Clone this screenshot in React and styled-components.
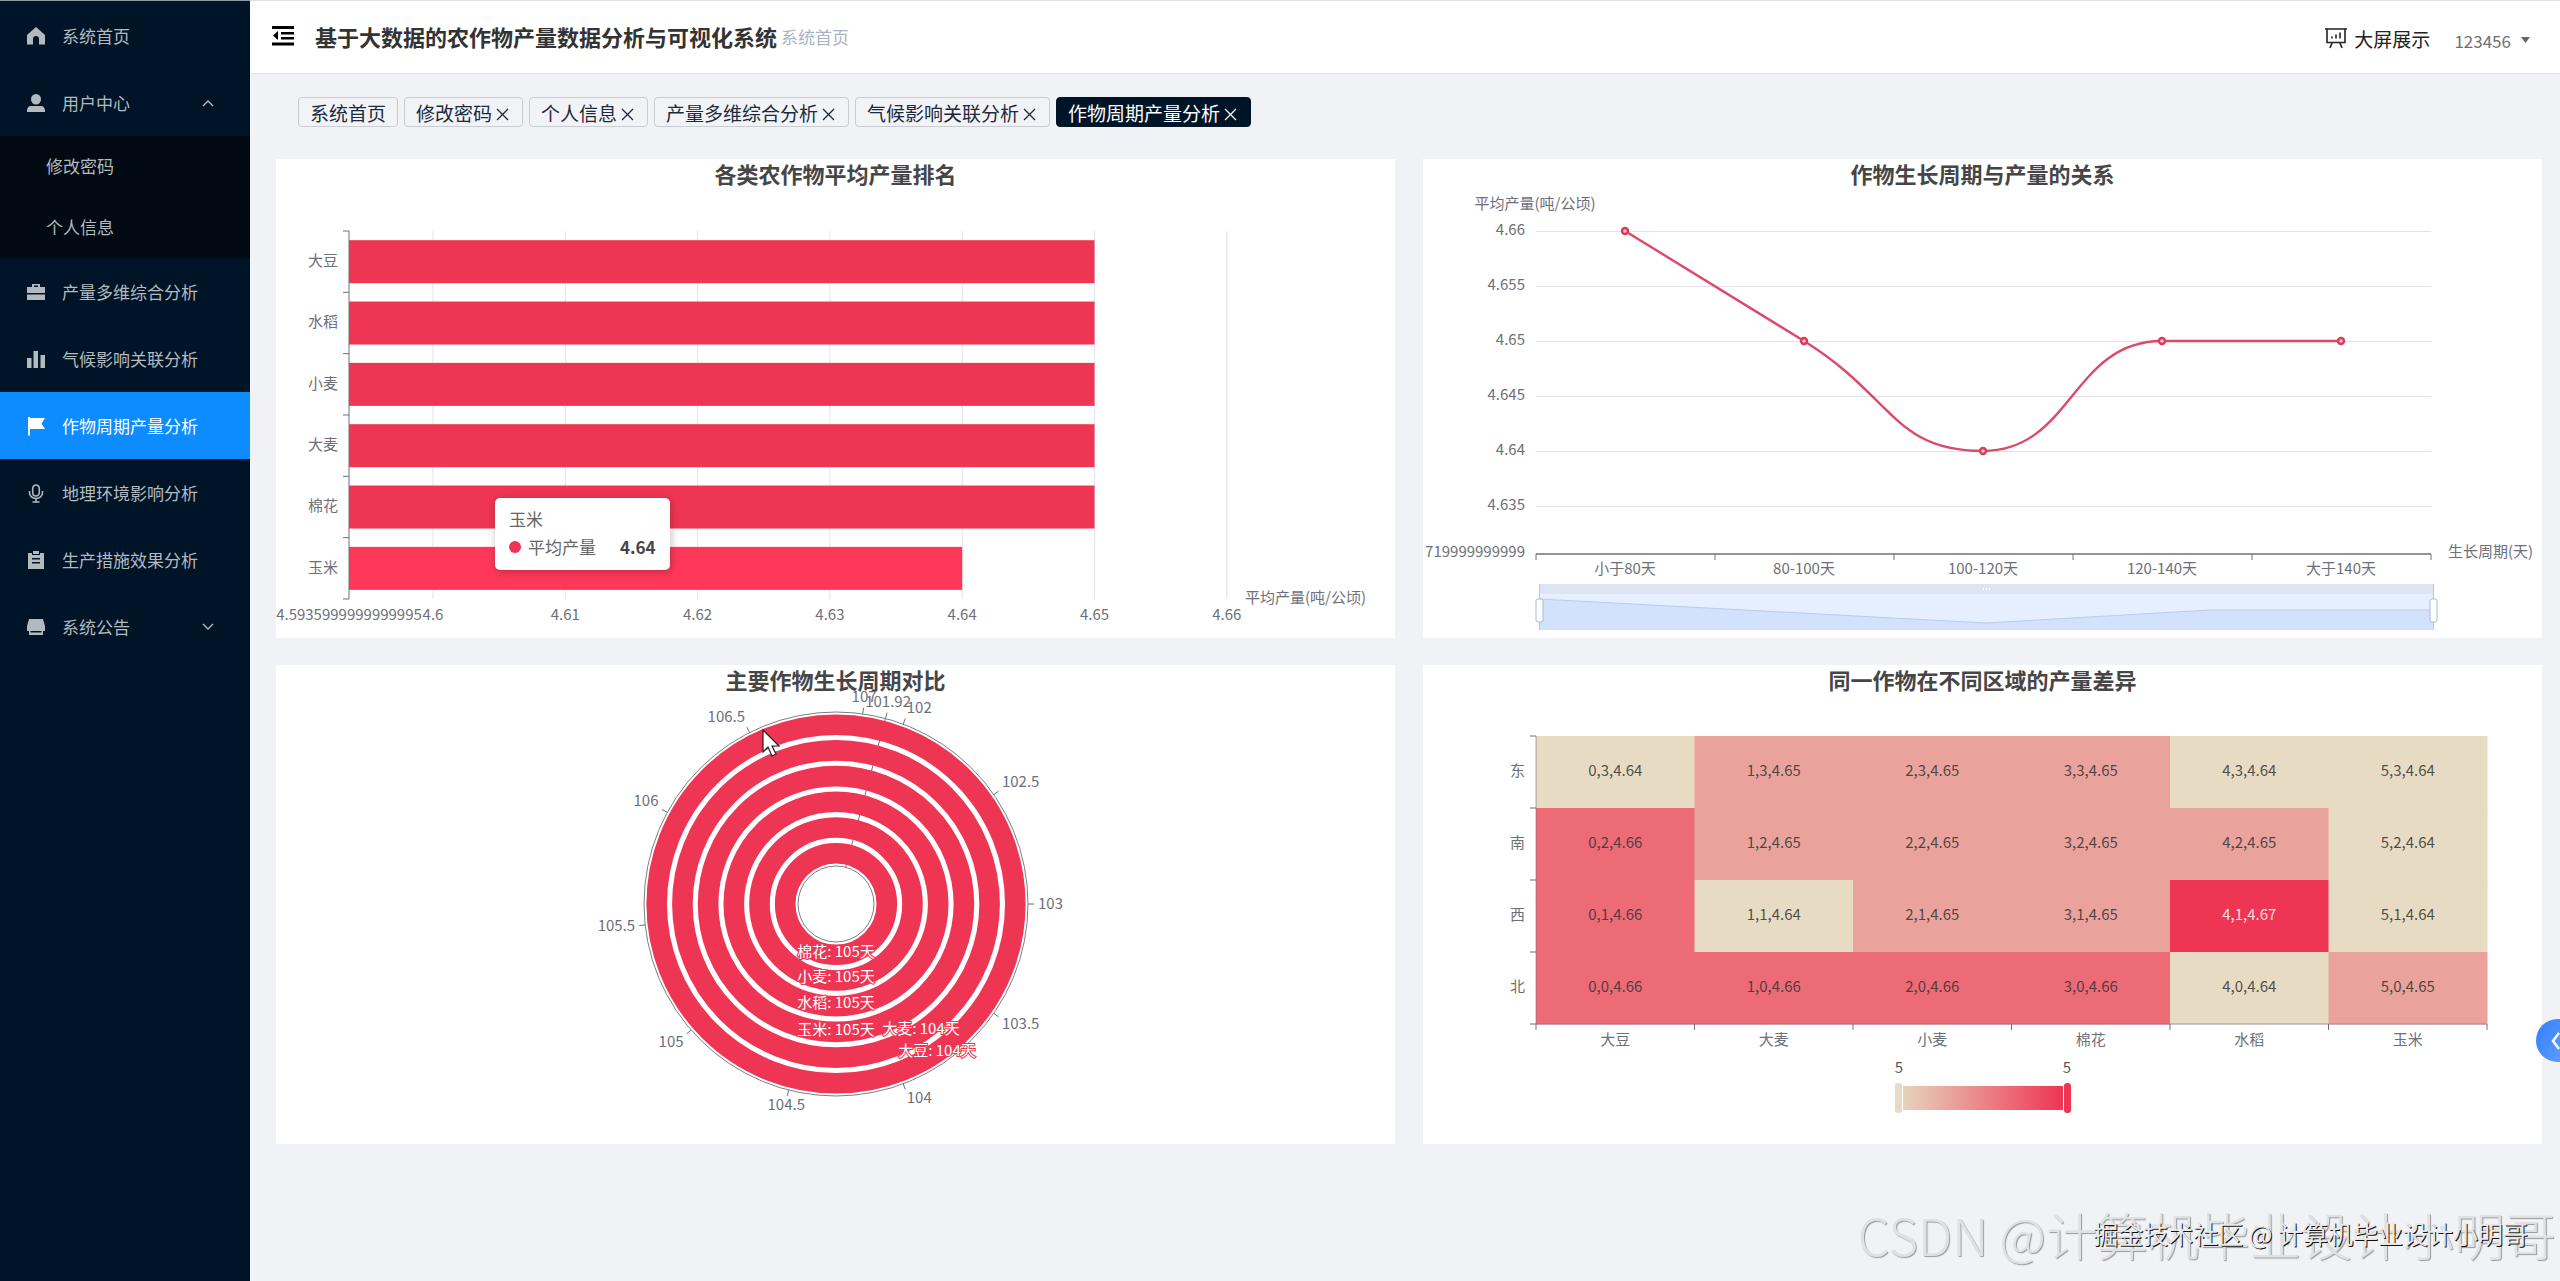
import { useState } from 'react'
import styled, { createGlobalStyle } from 'styled-components'

const menu = [
    { name: '系统首页', icon: 'home' },
    { name: '用户中心', icon: 'user', children: ['修改密码', '个人信息'] },
    { name: '产量多维综合分析', icon: 'case' },
    { name: '气候影响关联分析', icon: 'bars' },
    { name: '作物周期产量分析', icon: 'flag' },
    { name: '地理环境影响分析', icon: 'mic' },
    { name: '生产措施效果分析', icon: 'board' },
    { name: '系统公告', icon: 'notice', closed: true },
]

const tabs = ['系统首页', '修改密码', '个人信息', '产量多维综合分析', '气候影响关联分析', '作物周期产量分析']

const icons = {
    home: <path d='M9 0 0 8v9.500h6v-5.500a3 3 0 0 1 6 0v5.500h6V8z' />,
    user: <path d='M9 0a5 5 0 0 1 5 5.200A5 5 0 0 1 9 10.500 5 5 0 0 1 4 5.200 5 5 0 0 1 9 0zM4 12h10c2.500 0 4 2 4 4.500V18H0v-1.500C0 14 1.500 12 4 12z' />,
    case: <path fillRule='evenodd' d='M5 4V1h8v3h5v6H0V4zm2 0h4V2.500H7zM0 11.500h18V17H0z' />,
    bars: <path d='M0 8h4.500v10H0zM6.500 1h4.500v17H6.500zM13.500 5H18v13h-4.500z' />,
    flag: <path d='M1 0h2v1h15l-3.500 5.500L18 12H3v6.500H1z' />,
    mic: <path d='M9 1a3.300 3.300 0 0 1 3.300 3.300v4.400a3.300 3.300 0 0 1-6.600 0V4.300A3.300 3.300 0 0 1 9 1zM2.500 7v2a6.500 5.500 0 0 0 13 0V7M9 14.500V18M5.500 18h7' fill='none' stroke='currentColor' strokeWidth='1.600' />,
    board: <path fillRule='evenodd' d='M1 2h4v2h8V2h4v16H1zM6 0h6v3H6zM5 7v1.500h8V7zm0 4v1.500h8V11z' />,
    notice: <path fillRule='evenodd' d='M2 1h14l2 7v5h-2v4H2v-4H0V8zM3.500 13v1.500h11V13z' />,
}

const App = () => {
    const [active, setActive] = useState('作物周期产量分析')

    return (
        <Layout>
            <GlobalStyle />
            <Sidebar>
                {menu.map((item) => (
                    <div key={item.name}>
                        <MenuItem $active={item.name === active} onClick={() => setActive(item.name)}>
                            <MenuIcon viewBox='0 0 18 18'>{icons[item.icon]}</MenuIcon>
                            {item.name}
                            {(item.children || item.closed) &&
                                <Arrow viewBox='0 0 12 8'>
                                    <path d={item.closed ? 'M1 1l5 5 5-5' : 'M1 7l5-5 5 5'} />
                                </Arrow>}
                        </MenuItem>
                        {item.children &&
                            <SubMenu>
                                {item.children.map((child) => <SubItem key={child}>{child}</SubItem>)}
                            </SubMenu>}
                    </div>
                ))}
            </Sidebar>
            <Main>
                <Header>
                    <IconButton aria-label='收起菜单'>
                        <svg width='22' height='20' viewBox='0 0 22 20'>
                            <path d='M0 0h22v3H0zM9 6h13v2.500H9zM9 11h13v2.500H9zM0 16.500h22v3H0zM6 5v9L1 9.500z' />
                        </svg>
                    </IconButton>
                    <SystemName>基于大数据的农作物产量数据分析与可视化系统</SystemName>
                    <Crumb href='#home'>系统首页</Crumb>
                    <ScreenLink href='#screen'>
                        <svg width='22' height='22' viewBox='0 0 22 22' fill='none' stroke='#222' strokeWidth='1.600'>
                            <path d='M0 2h22M2 2v13.500h18V2M7 16l-2 5M15 16l2 5M7 11.500v-2M11 11.500v-4M15 11.500v-6' />
                        </svg>
                        大屏展示
                    </ScreenLink>
                    <UserButton>
                        123456
                        <svg width='9' height='6' viewBox='0 0 9 6'><path d='M0 0h9L4.500 6z' fill='#666' /></svg>
                    </UserButton>
                </Header>
                <TabBar>
                    {tabs.map((tab, i) => (
                        <Tab key={tab} $active={tab === active}>
                            <TabName onClick={() => setActive(tab)}>{tab}</TabName>
                            {i > 0 &&
                                <CloseButton aria-label={`关闭${tab}`}>
                                    <svg width='13' height='13' viewBox='0 0 13 13'><path d='M1 1l11 11M12 1L1 12' fill='none' stroke='currentColor' strokeWidth='1.300' /></svg>
                                </CloseButton>}
                        </Tab>
                    ))}
                </TabBar>
                <Charts>
                    <Card>
                        <Title>各类农作物平均产量排名</Title>
                        <RankChart />
                        <Tooltip>
                            <span>玉米</span>
                            <TooltipRow><Dot />平均产量<b>4.64</b></TooltipRow>
                        </Tooltip>
                    </Card>
                    <Card>
                        <Title>作物生长周期与产量的关系</Title>
                        <CycleChart />
                    </Card>
                    <Card>
                        <Title>主要作物生长周期对比</Title>
                        <PolarChart />
                    </Card>
                    <Card>
                        <Title>同一作物在不同区域的产量差异</Title>
                        <RegionChart />
                    </Card>
                </Charts>
            </Main>
            <Drawer aria-label='展开'>
                <svg width='10' height='20' viewBox='0 0 10 20'><path d='M9 2L3 10l6 8' fill='none' stroke='#fff' strokeWidth='2.500' /></svg>
            </Drawer>
            <BigMark>CSDN @计算机毕业设计小明哥</BigMark>
            <SmallMark>掘金技术社区 @ 计算机毕业设计小明哥</SmallMark>
        </Layout>
    )
}

const RankChart = () => {
    const crops = ['大豆', '水稻', '小麦', '大麦', '棉花', '玉米']
    const values = ['4.6', '4.61', '4.62', '4.63', '4.64', '4.65', '4.66']
    const top = 72
    const band = 368 / 6
    const x = (i) => 157 + i * 132.3

    return (
        <Chart viewBox='0 28 1119 451'>
            {values.map((v, i) => (
                <g key={v}>
                    <line x1={x(i)} x2={x(i)} y1={top} y2='440' stroke='#e0e3e8' />
                    <text x={x(i)} y='461' textAnchor='middle'>{v}</text>
                </g>
            ))}
            <text x='73' y='461' textAnchor='middle'>4.5935999999999995</text>
            {crops.map((crop, i) => (
                <g key={crop}>
                    <rect x='73' y={top + i * band + 9.2} height='43' width={(crop === '玉米' ? x(4) : x(5)) - 73} fill={crop === '玉米' ? '#ff3859' : '#ef3554'} />
                    <line x1='67' x2='73' y1={top + i * band} y2={top + i * band} stroke='#6e7079' />
                    <text x='62' y={top + i * band + 35} textAnchor='end'>{crop}</text>
                </g>
            ))}
            <path d='M73 72V440H67' fill='none' stroke='#6e7079' />
            <text x='969' y='444'>平均产量(吨/公顷)</text>
        </Chart>
    )
}

const CycleChart = () => {
    const levels = ['4.66', '4.655', '4.65', '4.645', '4.64', '4.635']
    const cycles = ['小于80天', '80-100天', '100-120天', '120-140天', '大于140天']
    const points = [[202, 72], [381, 182], [560, 292], [739, 182], [918, 182]]

    return (
        <Chart viewBox='0 28 1119 451'>
            <text x='112' y='50' textAnchor='middle'>平均产量(吨/公顷)</text>
            {levels.map((level, i) => (
                <g key={level}>
                    <line x1='113' x2='1008' y1={72.500 + i * 55} y2={72.500 + i * 55} stroke='#e0e3e8' />
                    <text x='102' y={76 + i * 55} textAnchor='end'>{level}</text>
                </g>
            ))}
            <text x='102' y='398' textAnchor='end'>719999999999</text>
            <line x1='113' x2='1008' y1='395' y2='395' stroke='#6e7079' strokeWidth='1.500' />
            {[113, 292, 471, 650, 829, 1008].map((x) => <line key={x} x1={x} x2={x} y1='395' y2='401' stroke='#6e7079' />)}
            {cycles.map((cycle, i) => <text key={cycle} x={points[i][0]} y='415' textAnchor='middle'>{cycle}</text>)}
            <text x='1025' y='398'>生长周期(天)</text>
            <path d='M202 72L381 182C470 237 470 292 560 292C649 292 649 182 739 182L918 182' fill='none' stroke='#dc4a6a' strokeWidth='2.400' />
            {points.map(([x, y]) => <circle key={x} cx={x} cy={y} r='3' fill='#f7c3ce' stroke='#dc3a5c' strokeWidth='2.400' />)}
            {/* data zoom */}
            <rect x='116' y='425' width='895' height='10' fill='#dde4f2' />
            <rect x='116' y='435' width='895' height='36' fill='#e6efff' />
            <path d='M116 440L340 452L563 464L787 451H1011V471H116z' fill='#d2e1fc' />
            <path d='M116 440L340 452L563 464L787 451H1011' fill='none' stroke='#bccbea' />
            <path d='M116.500 425V471M1010.500 425V471' stroke='#b8c5df' />
            <path d='M560 430h7' stroke='#fff' strokeWidth='2' strokeDasharray='1 2' />
            <rect x='113' y='440' width='7' height='23' rx='2' fill='#fff' stroke='#acb8d1' />
            <rect x='1007' y='440' width='7' height='23' rx='2' fill='#fff' stroke='#acb8d1' />
        </Chart>
    )
}

const PolarChart = () => {
    const values = [101.92, 102, 102.5, 103, 103.5, 104, 104.5, 105, 105.5, 106, 106.5, 107]
    const labels = [
        ['棉花: 105天', 560, 292],
        ['小麦: 105天', 560, 317],
        ['水稻: 105天', 560, 343],
        ['玉米: 105天', 560, 370],
        ['大麦: 104天', 645, 369],
        ['大豆: 104天', 661, 391],
    ]
    const point = (value, r) => {
        const angle = (20.5 + (value - 102) * 69.5) * Math.PI / 180
        return [560 + r * Math.sin(angle), 239 - r * Math.cos(angle)]
    }
    const line = (value, from, to) => {
        const [x1, y1] = point(value, from)
        const [x2, y2] = point(value, to)
        return <line x1={x1} y1={y1} x2={x2} y2={y2} stroke='#6e7079' />
    }

    return (
        <Chart viewBox='0 28 1119 451'>
            {line(101.92, 38, 192)}
            {[0, 1, 2, 3, 4, 5].map((i) => <circle key={i} cx='560' cy='239' r={50.800 + i * 25.7} fill='none' stroke='#ef3554' strokeWidth='20.600' />)}
            <circle cx='560' cy='239' r='192' fill='none' stroke='#7c7e85' />
            <circle cx='560' cy='239' r='38' fill='none' stroke='#7c7e85' />
            {values.map((value) => {
                const [x, y] = point(value, 202)
                const dx = x - 560
                const dy = y - 239
                const anchor = Math.abs(dx) < 60 ? 'middle' : dx > 0 ? 'start' : 'end'
                const shift = Math.abs(dy) < 30 ? 5 : dy < 0 ? -2 : 10
                return (
                    <g key={value}>
                        {line(value, 192, 198)}
                        <text x={x} y={y + shift} textAnchor={anchor}>{value}</text>
                    </g>
                )
            })}
            {labels.map(([label, x, y]) => <RingLabel key={label} x={x} y={y}>{label}</RingLabel>)}
            <path d='M487 65v22l5-5 4 9 4-2-4-8h7z' fill='#fff' stroke='#222' strokeWidth='1.200' />
        </Chart>
    )
}

const RegionChart = () => {
    const crops = ['大豆', '大麦', '小麦', '棉花', '水稻', '玉米']
    const regions = ['东', '南', '西', '北']
    const data = [
        [4.64, 4.65, 4.65, 4.65, 4.64, 4.64],
        [4.66, 4.65, 4.65, 4.65, 4.65, 4.64],
        [4.66, 4.64, 4.65, 4.65, 4.67, 4.64],
        [4.66, 4.66, 4.66, 4.66, 4.64, 4.65],
    ]
    const colors = { 4.64: '#e7dbc3', 4.65: '#eaa39c', 4.66: '#ed6a77', 4.67: '#ef3554' }
    const w = 158.5
    const h = 72

    return (
        <Chart viewBox='0 28 1119 451'>
            <defs>
                <linearGradient id='range'>
                    <stop offset='0' stopColor='#e7d3bd' />
                    <stop offset='1' stopColor='#ef3554' />
                </linearGradient>
            </defs>
            {data.map((row, r) => row.map((value, c) => (
                <g key={`${c}${r}`}>
                    <rect x={113 + c * w} y={71 + r * h} width={w + .5} height={h + .5} fill={colors[value]} />
                    <CellText x={113 + c * w + w / 2} y={111 + r * h} $light={value === 4.67}>{`${c},${3 - r},${value}`}</CellText>
                </g>
            )))}
            <path d='M113 71V359H1064' fill='none' stroke='#6e7079' strokeOpacity='.6' />
            {[0, 1, 2, 3, 4].map((i) => <line key={i} x1='107' x2='113' y1={71 + i * h} y2={71 + i * h} stroke='#6e7079' />)}
            {[0, 1, 2, 3, 4, 5, 6].map((i) => <line key={i} x1={113 + i * w} x2={113 + i * w} y1='359' y2='365' stroke='#6e7079' />)}
            {regions.map((region, i) => <text key={region} x='102' y={111 + i * h} textAnchor='end'>{region}</text>)}
            {crops.map((crop, i) => <text key={crop} x={113 + i * w + w / 2} y='380' textAnchor='middle'>{crop}</text>)}
            <CellText x='476' y='408'>5</CellText>
            <CellText x='644' y='408'>5</CellText>
            <rect x='480' y='421' width='160' height='24' fill='url(#range)' />
            <rect x='472' y='418' width='7' height='30' rx='3' fill='#e5dcc8' />
            <rect x='641' y='418' width='7' height='30' rx='3' fill='#ef3554' />
        </Chart>
    )
}

const GlobalStyle = createGlobalStyle`
    * {
        box-sizing: border-box;
    }
    body {
        margin: 0;
        background: #f0f2f5;
        font-family: 'Noto Sans CJK SC', sans-serif;
    }
    button {
        border: none;
        background: none;
        padding: 0;
        font: inherit;
        color: inherit;
        cursor: pointer;
    }
    a {
        text-decoration: none;
    }
`
const Layout = styled.div`
    display: flex;
    min-height: 100vh;
    position: relative;
    overflow: hidden;
`
const Sidebar = styled.nav`
    width: 250px;
    flex-shrink: 0;
    padding-top: 1px;
    border-top: 1px solid #8b98a3;
    background: #001428;
`
const MenuItem = styled.button`
    display: flex;
    align-items: center;
    width: 100%;
    height: 67px;
    padding: 0 36px 0 27px;
    font-size: 17px;
    color: ${(props) => props.$active ? '#fff' : '#b3babf'};
    background: ${(props) => props.$active ? '#0d8cff' : 'transparent'};
`
const MenuIcon = styled.svg`
    width: 18px;
    height: 18px;
    margin-right: 17px;
    fill: currentColor;
    overflow: visible;
`
const Arrow = styled.svg`
    width: 12px;
    height: 8px;
    margin-left: auto;
    fill: none;
    stroke: currentColor;
    stroke-width: 1.3;
`
const SubMenu = styled.div`
    background: #010a13;
`
const SubItem = styled.button`
    display: block;
    width: 100%;
    height: 61px;
    padding: 0 0 2px 46px;
    text-align: left;
    font-size: 17px;
    color: #b3babf;
`
const Main = styled.main`
    flex: 1;
    min-width: 0;
`
const Header = styled.header`
    display: flex;
    align-items: center;
    height: 74px;
    padding: 0 30px 2px 22px;
    background: #fff;
    border-top: 1px solid #dfe1e4;
    border-bottom: 1px solid #e1e3e6;
`
const IconButton = styled.button`
    display: flex;
`
const SystemName = styled.h1`
    margin: 0 4px 0 21px;
    font-size: 22px;
    line-height: 32px;
    color: #333;
`
const Crumb = styled.a`
    font-size: 17px;
    color: #a9b3c0;
`
const ScreenLink = styled.a`
    display: flex;
    align-items: center;
    gap: 7px;
    margin: 4px 24px 0 auto;
    font-size: 19px;
    color: #222;
`
const UserButton = styled.button`
    display: flex;
    align-items: center;
    gap: 10px;
    margin-top: 8px;
    font-size: 17px;
    color: #707070;
`
const TabBar = styled.div`
    display: flex;
    flex-wrap: wrap;
    gap: 6px;
    padding: 23px 48px 32px;
`
const Tab = styled.div`
    display: flex;
    align-items: center;
    height: 30px;
    padding: 2px 11px 0;
    border: 1px solid ${(props) => props.$active ? '#001428' : '#c9cdd3'};
    border-radius: 4px;
    color: ${(props) => props.$active ? '#fff' : '#1b2a3c'};
    background: ${(props) => props.$active ? '#001428' : '#f1f3f7'};
`
const TabName = styled.button`
    font-size: 19px;
    line-height: 26px;
`
const CloseButton = styled.button`
    display: flex;
    margin: 2px 2px 0 4px;
`
const Charts = styled.section`
    display: grid;
    grid-template-columns: 1fr 1fr;
    gap: 27px 28px;
    padding: 0 18px 27px 26px;
`
const Card = styled.article`
    position: relative;
    background: #fff;
`
const Title = styled.h2`
    margin: 0;
    font-size: 22px;
    line-height: 28px;
    text-align: center;
    color: #464646;
`
const Chart = styled.svg`
    display: block;
    width: 100%;
    overflow: visible;
    font-size: 15px;
    fill: #6e7079;
    position: relative;
`
const RingLabel = styled.text`
    text-anchor: middle;
    fill: #fff;
    stroke: #ef3554;
    stroke-width: 2px;
    paint-order: stroke;
`
const CellText = styled.text`
    text-anchor: middle;
    fill: ${(props) => props.$light ? '#fff' : '#333'};
    fill-opacity: .85;
`
const Tooltip = styled.div`
    position: absolute;
    left: 219px;
    top: 339px;
    padding: 7px 14px 9px;
    border-radius: 5px;
    background: #fff;
    box-shadow: 1px 2px 10px rgba(0, 0, 0, .25);
    font-size: 17px;
    line-height: 28px;
    color: #666;
`
const TooltipRow = styled.div`
    display: flex;
    align-items: center;
    b {
        margin-left: 24px;
        color: #464646;
    }
`
const Dot = styled.span`
    width: 12px;
    height: 12px;
    margin-right: 7px;
    border-radius: 50%;
    background: #ef3554;
`
const Drawer = styled.button`
    position: fixed;
    right: 0;
    bottom: 219px;
    display: flex;
    align-items: center;
    justify-content: flex-end;
    width: 24px;
    height: 43px;
    border-radius: 22px 0 0 22px;
    background: linear-gradient(120deg, #2f7dff, #5c9cff);
`
const BigMark = styled.div`
    position: absolute;
    right: 4px;
    bottom: 9px;
    font-size: 51px;
    font-weight: 300;
    line-height: 76px;
    color: #dfe1e4;
    text-shadow: 1px 1px 1px #999;
`
const SmallMark = styled.div`
    position: absolute;
    right: 32px;
    bottom: 30px;
    font-size: 25px;
    line-height: 36px;
    color: #e8e8e8;
    text-shadow: 1px 1px 0 #111;
`

export default App
